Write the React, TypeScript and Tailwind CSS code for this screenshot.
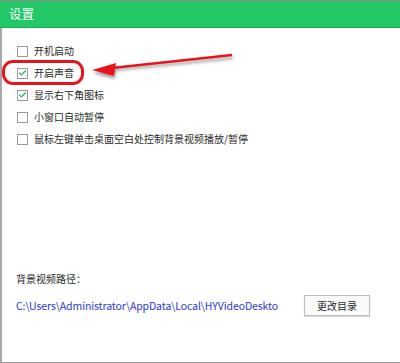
import { Check } from 'lucide-react'

const options = [
  { label: '开机启动', checked: false },
  { label: '开启声音', checked: true },
  { label: '显示右下角图标', checked: true },
  { label: '小窗口自动暂停', checked: false },
  { label: '鼠标左键单击桌面空白处控制背景视频播放/暂停', checked: false },
]

function Box({ checked }: { checked: boolean }) {
  return (
    <span className="w-[11px] h-[11px] border border-[#9a9a9a] bg-white flex items-center justify-center shrink-0">
      {checked && <Check className="w-[10px] h-[10px] text-[#15b04a]" strokeWidth={3} />}
    </span>
  )
}

export default function App() {
  return (
    <div
      className="relative w-[400px] h-[363px] bg-white border-t border-[#8c8c8c] overflow-hidden flex flex-col"
      style={{ fontFamily: '"Microsoft YaHei", "Noto Sans CJK SC", sans-serif' }}
    >
      <div className="h-[27px] bg-[#22c866] border-b border-[#1eb45a] flex items-center pl-[9px] text-white text-[12.5px]">
        设置
      </div>

      <div className="flex-1 flex flex-col border-l-2 border-b border-l-[#a8a8a8] border-b-[#9a9a9a]">
        <div className="pt-[17px] pl-[15px] flex flex-col gap-[10px] text-[10px] text-[#2a2a2a] leading-[12px]">
          {options.map((o) => (
            <label key={o.label} className="flex items-center gap-[6px] h-[12px]">
              <Box checked={o.checked} />
              <span>{o.label}</span>
            </label>
          ))}
        </div>

        <div className="mt-auto pl-[14px] pb-[46px] text-[10px]">
          <div className="text-[#2a2a2a] mb-[9px]">背景视频路径：</div>
          <div className="flex items-center">
            <span className="text-[#2a3ad6] text-[10.5px] tracking-[-0.1px] w-[288px] whitespace-nowrap overflow-hidden">
              C:\Users\Administrator\AppData\Local\HYVideoDeskto
            </span>
            <button className="w-[66px] h-[21px] border border-[#bdbdbd] bg-[#fafafa] shadow-[0_1px_1px_rgba(0,0,0,0.15)] text-[#2a2a2a] text-[10px]">
              更改目录
            </button>
          </div>
        </div>
      </div>

      {/* annotation overlay */}
      <div className="absolute left-[2px] top-[59px] w-[82px] h-[25px] border-[3px] border-[#e8141c] rounded-[11px]" />
      <svg className="absolute left-0 top-0" width="400" height="363">
        <defs>
          <filter id="sh" x="-20%" y="-50%" width="140%" height="200%">
            <feGaussianBlur stdDeviation="1.5" />
          </filter>
        </defs>
        <g opacity="0.45" filter="url(#sh)" transform="translate(1,3)">
          <line x1="112" y1="66" x2="232" y2="54" stroke="#333" strokeWidth="2.5" />
          <polygon points="92,69 116,62 114,75" fill="#333" />
        </g>
        <line x1="112" y1="67" x2="232" y2="54" stroke="#e8141c" strokeWidth="2.5" />
        <polygon points="92,69 116,62 114,75" fill="#e8141c" />
      </svg>
    </div>
  )
}
